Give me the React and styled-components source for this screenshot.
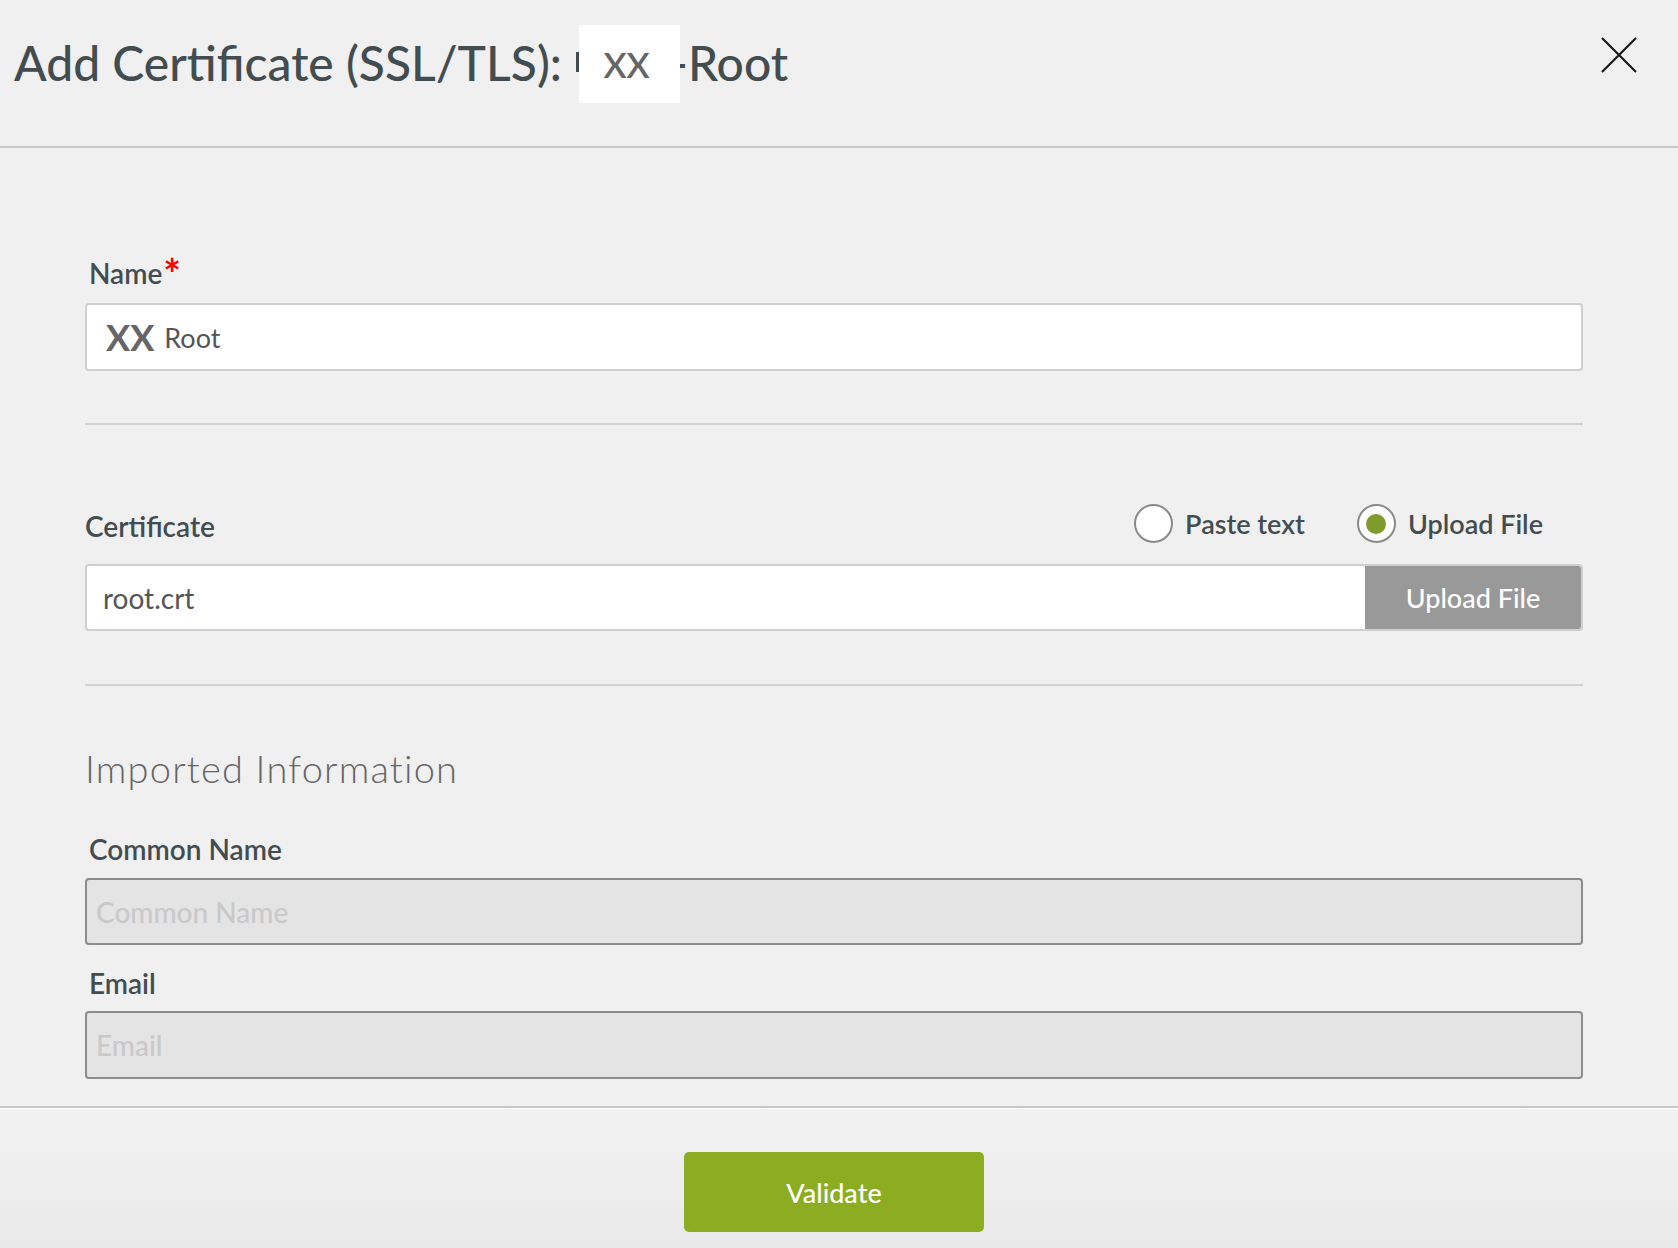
import React from 'react';
import styled, { createGlobalStyle } from 'styled-components';

const Global = createGlobalStyle`
  html, body { margin: 0; padding: 0; background: #f0f0f0; }
  body { font-family: Lato, "Open Sans", sans-serif; color: #434d50; }
  * { box-sizing: border-box; }
`;

const Page = styled.div`
  width: 1678px;
  height: 1248px;
  display: flex;
  flex-direction: column;
  overflow: hidden;
  background: #f0f0f0;
`;

const Header = styled.header`
  height: 148px;
  flex: none;
  display: flex;
  justify-content: space-between;
  align-items: flex-start;
  padding: 25px 41px 0 14px;
  border-bottom: 2px solid #c8c8c8;
`;

const Title = styled.h1`
  margin: 0;
  display: flex;
  align-items: flex-start;
  font-size: 48px;
  font-weight: 500;
  line-height: 58px;
  color: #434d50;
  white-space: pre;
`;

const TitleText = styled.span`
  margin-top: 9px;
  margin-left: ${p => p.$pull ?? 0}px;
`;

const CutGlyph = styled.span`
  width: 3px;
  height: 20px;
  margin: 27px 0 0 2px;
  background: #434d50;
  flex: none;
`;

const Redact = styled.span`
  position: relative;
  z-index: 1;
  width: 101px;
  height: 78px;
  flex: none;
  background: #fff;
  display: flex;
  align-items: center;
  justify-content: center;
  padding-right: 6px;
  font-size: 35px;
  font-weight: 600;
  color: #666;
`;

const CloseButton = styled.button`
  margin-top: 12px;
  width: 36px;
  height: 36px;
  padding: 0;
  border: 0;
  background: none;
  display: flex;
  cursor: pointer;
`;

const Body = styled.main`
  flex: 1;
  overflow: hidden;
  padding: 108px 95px 0 85px;
  display: flex;
  flex-direction: column;
`;

const Label = styled.label`
  display: block;
  margin: 0 0 ${p => p.$gap ?? 13}px ${p => p.$indent ?? 4}px;
  font-size: 28px;
  font-weight: 600;
  line-height: 34px;
  color: #434d50;
`;

const Required = styled.span`
  color: #ff0000;
  font-size: 42px;
  font-weight: 700;
  line-height: 0;
  vertical-align: -6px;
  margin-left: 1px;
`;

const Field = styled.div`
  height: ${p => p.$h ?? 68}px;
  display: flex;
  align-items: stretch;
  border: 2px solid ${p => (p.$disabled ? '#8c8c8c' : '#cfcfcf')};
  border-radius: 4px;
  background: ${p => (p.$disabled ? '#e4e4e4' : '#ffffff')};
  overflow: hidden;
`;

const FieldText = styled.div`
  flex: 1;
  display: flex;
  align-items: center;
  padding-left: ${p => p.$pad ?? 16}px;
  font-size: ${p => p.$size ?? 28}px;
  font-weight: ${p => (p.$placeholder ? 500 : 400)};
  color: ${p => (p.$placeholder ? '#c9c9c9' : '#555')};
  white-space: pre;
`;

const MaskedBold = styled.span`
  font-size: 36px;
  font-weight: 700;
  color: #666;
  margin-right: 10px;
`;

const UploadButton = styled.button`
  width: 216px;
  flex: none;
  border: 0;
  border-radius: 0 2px 2px 0;
  background: #999999;
  color: #fff;
  font-family: inherit;
  font-size: 27px;
  font-weight: 500;
  cursor: pointer;
`;

const Divider = styled.hr`
  margin: ${p => p.$top}px 0 ${p => p.$bottom}px;
  height: 2px;
  border: 0;
  background: #d2d2d2;
  flex: none;
`;

const CertRow = styled.div`
  display: flex;
  justify-content: space-between;
  align-items: flex-end;
  padding-right: 40px;
  margin-bottom: 21px;
`;

const RadioGroup = styled.div`
  display: flex;
  gap: 52px;
`;

const RadioItem = styled.label`
  display: flex;
  align-items: center;
  gap: 12px;
  font-size: 27px;
  font-weight: 600;
  color: #434d50;
  line-height: 34px;
  cursor: pointer;
`;

const RadioCircle = styled.span`
  width: 39px;
  height: 39px;
  border-radius: 50%;
  border: 2px solid #8a8a8a;
  background: #fff;
  display: flex;
  align-items: center;
  justify-content: center;
  &::after {
    content: '';
    width: 20px;
    height: 20px;
    border-radius: 50%;
    background: ${p => (p.$checked ? '#7f9b2b' : 'transparent')};
  }
`;

const SectionTitle = styled.h2`
  margin: 0 0 42px;
  font-size: 38px;
  font-weight: 300;
  line-height: 44px;
  letter-spacing: 1.2px;
  color: #666;
`;

const Footer = styled.footer`
  height: 142px;
  flex: none;
  border-top: 2px solid #c8c8c8;
  box-shadow: inset 0 1px 0 #ffffff;
  background: linear-gradient(#f2f2f2, #e9e9e9);
  display: flex;
  justify-content: center;
  align-items: flex-start;
  padding: 44px 10px 0 0;
`;

const ValidateButton = styled.button`
  width: 300px;
  height: 80px;
  border: 0;
  border-radius: 5px;
  background: #8cad21;
  color: #fff;
  font-family: inherit;
  font-size: 27px;
  font-weight: 500;
  cursor: pointer;
`;

const Radio = ({ checked, children }) => (
  <RadioItem>
    <RadioCircle $checked={checked} />
    {children}
  </RadioItem>
);

export default function App() {
  return (
    <Page>
      <Global />
      <Header>
        <Title>
          <TitleText>Add Certificate (SSL/TLS): </TitleText>
          <CutGlyph />
          <Redact>XX</Redact>
          <TitleText $pull={-10}>-Root</TitleText>
        </Title>
        <CloseButton aria-label="Close">
          <svg width="36" height="36" viewBox="0 0 36 36">
            <path d="M1 1 L35 35 M35 1 L1 35" stroke="#1a1a1a" strokeWidth="2.2" fill="none" />
          </svg>
        </CloseButton>
      </Header>

      <Body>
        <Label>
          Name<Required>*</Required>
        </Label>
        <Field>
          <FieldText $pad={19} $size={27}>
            <MaskedBold>XX</MaskedBold>Root
          </FieldText>
        </Field>

        <Divider $top={52} $bottom={79} />

        <CertRow>
          <Label $indent={0} $gap={0}>Certificate</Label>
          <RadioGroup>
            <Radio>Paste text</Radio>
            <Radio checked>Upload File</Radio>
          </RadioGroup>
        </CertRow>
        <Field $h={67}>
          <FieldText>root.crt</FieldText>
          <UploadButton>Upload File</UploadButton>
        </Field>

        <Divider $top={53} $bottom={60} />

        <SectionTitle>Imported Information</SectionTitle>

        <Label $gap={12}>Common Name</Label>
        <Field $h={67} $disabled>
          <FieldText $pad={9} $placeholder>Common Name</FieldText>
        </Field>

        <Label $gap={11} style={{ marginTop: 21 }}>Email</Label>
        <Field $h={68} $disabled>
          <FieldText $pad={9} $placeholder>Email</FieldText>
        </Field>
      </Body>

      <Footer>
        <ValidateButton>Validate</ValidateButton>
      </Footer>
    </Page>
  );
}
